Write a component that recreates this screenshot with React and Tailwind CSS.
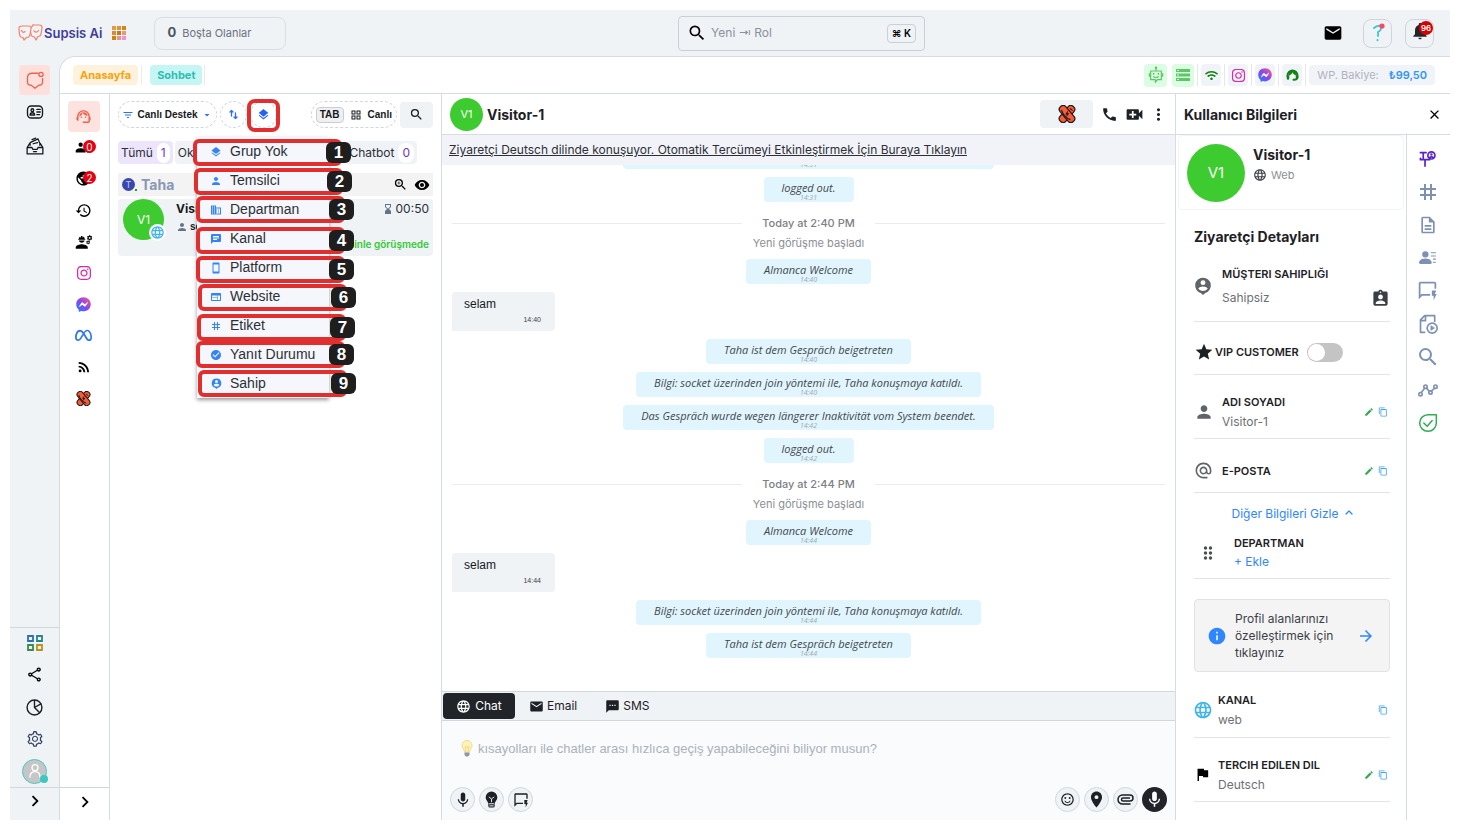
import React from "react";
import {
  MdLayers, MdPerson, MdDomain, MdChat, MdSmartphone, MdWeb, MdTag, MdCheckCircle, MdSearch, MdEmail,
  MdNotifications, MdSupportAgent, MdGroup, MdPublic, MdHistory, MdEngineering, MdRssFeed, MdFilterList,
  MdArrowDropDown, MdGridView, MdZoomIn, MdVisibility, MdHourglassBottom, MdLanguage, MdCall, MdVideoCall,
  MdMoreVert, MdClose, MdAssignmentInd, MdStar, MdAlternateEmail, MdEdit, MdContentCopy, MdDragIndicator,
  MdInfo, MdArrowForward, MdFlag, MdMic, MdOutlineQuickreply, MdPlace, MdSms,
  MdOutlineDescription, MdOutlineSentimentSatisfied, MdChevronRight, MdOutlineShare, MdMail,
} from "react-icons/md";
import { FaInstagram, FaFacebookMessenger, FaWifi } from "react-icons/fa";
import { FaMeta } from "react-icons/fa6";
import { BsPersonLinesFill } from "react-icons/bs";
import { AiOutlineSetting } from "react-icons/ai";

const stroke = { fill: "none", stroke: "currentColor", strokeLinecap: "round", strokeLinejoin: "round" };

function PersonPin({ size = 16, className = "" }) {
  return (
    <svg width={size} height={size} viewBox="0 0 24 24" className={className} aria-hidden="true">
      <path
        fill="currentColor"
        fillRule="evenodd"
        d="M12 1a10.300 10.300 0 0 1 3 20.200L12 24l-3-2.800A10.300 10.300 0 0 1 12 1Zm0 3.200a3.300 3.300 0 1 0 0 6.600 3.300 3.300 0 0 0 0-6.600Zm0 8.500c-2.700 0-5.400 1-6.300 2.700 1.300 2 3.700 3.400 6.300 3.400s5-1.400 6.300-3.400c-.9-1.700-3.600-2.700-6.300-2.700Z"
      />
    </svg>
  );
}

function Knot({ size = 16 }) {
  return (
    <svg width={size} height={size} viewBox="0 0 24 24" aria-hidden="true">
      <g stroke="#1f1a1a" strokeWidth="1.600" fill="#fb5a36">
        <rect x="7" y="-1" width="10" height="26" rx="4.500" transform="rotate(40 12 12)" />
        <rect x="7" y="-1" width="10" height="26" rx="4.500" transform="rotate(-40 12 12)" />
        <path fill="none" d="M4.500 6.500c2 6 6 11 12 13M16 4.500L19.500 7.500" />
      </g>
      <path fill="#1f1a1a" d="M13.500 7l-4 5.500h2.200l-.7 4 4-5.500h-2.200z" />
    </svg>
  );
}

function Paperclip() {
  return (
    <svg width="17" height="11" viewBox="0 0 34 22" {...stroke} strokeWidth="3" aria-hidden="true">
      <path d="M26 20H11a9 9 0 0 1 0-18h15a6 6 0 0 1 0 12H12a3 3 0 0 1 0-6h13" />
    </svg>
  );
}

function Messenger({ size = 15 }) {
  return <FaFacebookMessenger size={size} fill="url(#messenger)" stroke="none" />;
}

function Instagram({ size = 16 }) {
  return <FaInstagram size={size} className="text-[#d92aa5]" />;
}

function Badge({ children }) {
  return (
    <span className="absolute -right-1 top-px flex h-[13px] w-[13px] items-center justify-center rounded-full bg-[#e60012] text-[10px] leading-none text-white">
      {children}
    </span>
  );
}

function IconButton({ label, className = "", children }) {
  return (
    <button type="button" aria-label={label} className={`flex shrink-0 items-center justify-center ${className}`}>
      {children}
    </button>
  );
}

function TopBar() {
  return (
    <header className="grid h-[46px] shrink-0 grid-cols-[14fr_247px_11fr] items-center bg-[#eff3f6]">
      <div className="flex h-full items-center pl-2">
        <svg width="25" height="18" viewBox="0 0 50 36" {...stroke} strokeWidth="2.400" className="text-[#f4816c]" aria-hidden="true">
          <path d="M8 4h14q5 0 4 5l-2 12q-1 6-7 6l-5 5-2-5q-6 0-7-6L2 10q-1-6 6-6Z" />
          <path d="M30 2h12q7 0 6 6l-2 12q-1 5-6 5l-4 7-3-6q-6 0-7-6l-1-5" />
          <path d="M27 7l3-5M7 13q3 6 7 2M32 14q5 5 9-1" />
        </svg>
        <span className="ml-px text-[13px] font-semibold leading-5 text-[#3f3d99]">Supsis Ai</span>
        <button type="button" aria-label="Uygulamalar" className="ml-2.5 grid h-[14px] w-[14px] grid-cols-3 gap-px">
          {["bg-[#e09a50]", "bg-[#df9238]", "bg-[#d38612]", "bg-[#dc8a28]", "bg-[#c87b10]", "bg-[#e59a70]", "bg-[#c98418]", "bg-[#e5958c]", "bg-[#f48fdc]"].map((c, i) => (
            <span key={i} className={`h-1 w-1 ${c}`} />
          ))}
        </button>
        <div className="ml-7 flex h-[33px] w-[132px] items-center gap-1.5 rounded-lg border border-[#dadfe5] px-3 text-[11px] text-[#6b7280]">
          <b className="text-[13px] text-[#4b5563]">0</b>
          <span>Boşta Olanlar</span>
        </div>
      </div>
      <label className="flex h-[35px] items-center rounded border border-[#c9d0d8] px-2">
        <MdSearch size={20} className="shrink-0 text-black" />
        <input
          aria-label="Ara"
          placeholder="Yeni ⇥ Rol"
          className="min-w-0 flex-1 bg-transparent pl-1 text-[12px] outline-none placeholder:text-[#8b919b]"
        />
        <kbd className="rounded-sm border border-[#c9d0d8] px-1 font-[Inter,sans-serif] text-[10px] font-semibold leading-[17px] text-black">⌘ K</kbd>
      </label>
      <div className="flex items-center justify-end pr-4">
        <IconButton label="Posta"><MdMail size={20} className="text-black" /></IconButton>
        <IconButton label="Yardım" className="ml-5 h-[29px] w-[29px] rounded-lg border border-[#cfd5dc]">
          <svg width="18" height="20" viewBox="0 0 18 20" {...stroke} strokeWidth="1.800" className="text-[#3cc8c8]" aria-hidden="true">
            <path d="M5 5q3-3 7-2 1 4-3 6v4" />
            <path d="M8.500 17v.200" strokeWidth="2" />
            <circle cx="13" cy="3" r="2.600" fill="#ff4560" stroke="none" />
          </svg>
        </IconButton>
        <IconButton label="Bildirimler" className="relative ml-[13px] h-[29px] w-[29px] rounded-lg border border-[#cfd5dc] pb-1">
          <MdNotifications size={20} className="text-[#22262b]" />
          <span className="absolute right-0 top-px flex h-[14px] w-[14px] items-center justify-center rounded-full bg-[#d50000] text-[8px] font-semibold leading-none text-white">96</span>
        </IconButton>
      </div>
    </header>
  );
}

function MainRail() {
  return (
    <aside className="flex w-[49px] shrink-0 flex-col items-center bg-[#eff3f6]">
      <nav className="flex flex-1 flex-col items-center pt-[9px]">
        <IconButton label="Sohbetler" className="h-[30px] w-[31px] rounded-sm bg-[#fde0dc]">
          <svg width="18" height="18" viewBox="0 0 24 24" {...stroke} strokeWidth="1.700" className="text-[#f0614c]" aria-hidden="true">
            <path d="M16 3H8C4 3 2 5 2 9v6c0 3 2 4 5 4l5 4 5-4c3 0 5-1 5-4v-5" />
            <circle cx="20" cy="4.500" r="2.800" />
          </svg>
        </IconButton>
        <IconButton label="Kişiler" className="h-[34px] w-[31px]">
          <svg width="18" height="18" viewBox="0 0 24 24" {...stroke} strokeWidth="1.800" className="text-[#15181c]" aria-hidden="true">
            <rect x="2" y="4" width="20" height="16" rx="5" />
            <circle cx="8.500" cy="9.500" r="1.800" />
            <path d="M5.500 16q0-3 3-3t3 3ZM14.500 8.500H19M14.500 12H19M14.500 15.500H18" />
          </svg>
        </IconButton>
        <IconButton label="Arşiv" className="h-[33px] w-[31px]">
          <svg width="18" height="18" viewBox="0 0 24 24" {...stroke} strokeWidth="1.700" className="text-[#15181c]" aria-hidden="true">
            <path d="M1.500 14v8.500h21V14H16l-1 2.500H9L8 14ZM1.500 14L5 8.500M22.500 14L19 8.500M5.500 11V7.500L16 2.500l2.500 6V11M8 3.500l5-2M9.500 9l6-1.500M10 19.500h4" />
          </svg>
        </IconButton>
      </nav>
      <div className="flex h-[160px] w-full flex-col items-center border-t border-[#cfd8df]">
        <IconButton label="Modüller" className="h-[30px] w-8">
          <svg width="16" height="16" viewBox="0 0 16 16" fill="none" strokeWidth="1.800" aria-hidden="true">
            <path stroke="#2872b5" d="M1 1h5v5H1z" />
            <path stroke="#278688" d="M10 1h5v5h-5z" />
            <path stroke="#3c8a4e" d="M1 10h5v5H1z" />
            <path stroke="#b99316" d="M10 10h5v5h-5z" />
          </svg>
        </IconButton>
        <IconButton label="Paylaş" className="h-[33px] w-8"><MdOutlineShare size={17} className="text-black" /></IconButton>
        <IconButton label="Raporlar" className="h-8 w-8">
          <svg width="17" height="17" viewBox="0 0 24 24" {...stroke} strokeWidth="2" className="text-[#1c1f24]" aria-hidden="true">
            <circle cx="12" cy="12" r="10.500" />
            <path d="M12 2v10l9-5M12 12l7 7" />
          </svg>
        </IconButton>
        <IconButton label="Ayarlar" className="h-8 w-8"><AiOutlineSetting size={18} className="text-[#3a4466]" /></IconButton>
        <IconButton label="Profil" className="relative h-8 w-8">
          <span className="flex h-[25px] w-[25px] items-center justify-center rounded-full border border-[#4cc8c0] bg-[#c4c6c8] text-white">
            <svg width="16" height="16" viewBox="0 0 24 24" {...stroke} strokeWidth="2" aria-hidden="true">
              <circle cx="12" cy="7" r="4.500" />
              <path d="M4.500 21q0-8 7.500-8t7.500 8" />
            </svg>
          </span>
          <span className="absolute bottom-1 right-[3px] h-2 w-2 rounded-full bg-[#3cc8be]" />
        </IconButton>
      </div>
      <IconButton label="Menüyü genişlet" className="h-[33px] w-full border-t border-[#cfd8df] pb-1.5">
        <MdChevronRight size={22} className="text-black" />
      </IconButton>
    </aside>
  );
}

function SubHeader() {
  const tile = "h-[22px] w-5 rounded bg-[#f0f4f8]";
  const rule = <span className="h-[22px] w-px bg-[#e4e8ec]" />;
  return (
    <div className="flex h-[37px] shrink-0 items-center justify-between border-b border-[#d5dde3] pl-[13px] pr-[15px]">
      <nav className="flex items-center text-[11px] font-bold">
        <a href="#anasayfa" className="rounded bg-[#fff2dc] px-[7px] leading-5 text-[#f9a30c]">Anasayfa</a>
        <span className="ml-[3px] h-5 w-px bg-[#e8ebee]" />
        <a href="#sohbet" className="ml-2 rounded bg-[#c6f6f3] px-[7px] leading-5 text-[#2fbdb4]">Sohbet</a>
        <span className="ml-0.5 h-5 w-px bg-[#e8ebee]" />
      </nav>
      <div className="flex items-center gap-[3px]">
        <IconButton label="Bot" className="h-[23px] w-[23px] rounded bg-[#dcfce3] text-[#5dc763]">
          <svg width="16" height="18" viewBox="0 0 24 26" {...stroke} strokeWidth="1.800" aria-hidden="true">
            <path d="M4 7h16v13h-6l-3 4v-4H4ZM12 7V2M2 11v4M22 11v4M8.500 15.500q3.500 2.500 7 0" />
            <path d="M8.500 11v.500M15.500 11v.500" strokeWidth="2.500" />
            <circle cx="12" cy="2" r="1" />
          </svg>
        </IconButton>
        <IconButton label="Sunucu" className="ml-0.5 h-[23px] w-[22px] rounded bg-[#dcfce3] text-[#5dc763]">
          <svg width="14" height="12" viewBox="0 0 14 12" fill="currentColor" aria-hidden="true">
            <path d="M0 0h14v3H0zM0 4.500h14v3H0zM0 9h14v3H0z" />
            <path fill="#dcfce3" d="M1 1h2v1H1zM1 5.500h2v1H1zM1 10h2v1H1z" />
          </svg>
        </IconButton>
        {rule}
        <IconButton label="Bağlantı" className={tile}><FaWifi size={13} className="text-[#128012]" /></IconButton>
        {rule}
        <IconButton label="Instagram" className={tile}><Instagram size={15} /></IconButton>
        {rule}
        <IconButton label="Messenger" className={tile}><Messenger size={14} /></IconButton>
        {rule}
        <IconButton label="Temsilci" className={tile}>
          <svg width="13" height="12" viewBox="0 0 26 24" {...stroke} strokeWidth="4" className="text-[#128012]" aria-hidden="true">
            <path d="M3 15v-2a10 10 0 0 1 20 0v3q0 6-8 5.500" />
            <path d="M4 15v4M22 15v2" strokeWidth="5" />
            <path d="M6 13q5-1 7-7 2 6 8 7V7l-8-4-7 4Z" fill="currentColor" strokeWidth="1" />
          </svg>
        </IconButton>
        {rule}
        <div className="flex items-center gap-2.5 rounded bg-[#f0f4f8] px-2 text-[11px] leading-5">
          <span className="text-[#b0b2be]">WP. Bakiye:</span>
          <b className="font-semibold text-[#3396f5]">₺99,50</b>
        </div>
      </div>
    </div>
  );
}

function ChannelRail() {
  const items = [
    ["Ziyaretçiler", <><MdGroup size={17} /><Badge>0</Badge></>],
    ["Siteler", <><MdPublic size={17} /><Badge>2</Badge></>],
    ["Geçmiş", <MdHistory size={17} />],
    ["Ekip", <MdEngineering size={18} />],
    ["Instagram", <Instagram />],
    ["Messenger", <Messenger />],
    ["Meta", <FaMeta size={17} className="text-[#2f78f0]" />],
    ["RSS", <MdRssFeed size={16} />],
    ["Yapay zeka", <Knot size={15} />],
  ];
  return (
    <aside className="flex w-[50px] shrink-0 flex-col border-r border-[#d5dde3]">
      <nav className="flex flex-1 flex-col items-center pr-0.5 pt-[7px]">
        <div className="flex h-[313px] flex-col items-center">
          <IconButton label="Canlı destek" className="h-[31px] w-8 rounded-sm bg-[#fde3df]">
            <MdSupportAgent size={17} className="text-[#f0614c]" />
          </IconButton>
          {items.map(([label, icon]) => (
            <IconButton key={label} label={label} className="w-8 flex-1 text-black">
              <span className="relative">{icon}</span>
            </IconButton>
          ))}
        </div>
      </nav>
      <IconButton label="Kanalları genişlet" className="h-[33px] w-full border-t border-[#cfd8df] pb-1">
        <MdChevronRight size={22} className="text-black" />
      </IconButton>
    </aside>
  );
}

const groupings = [
  ["Grup Yok", <MdLayers size={12} />],
  ["Temsilci", <MdPerson size={12} />],
  ["Departman", <MdDomain size={12} />],
  ["Kanal", <MdChat size={12} />],
  ["Platform", <MdSmartphone size={12} />],
  ["Website", <MdWeb size={12} />],
  ["Etiket", <MdTag size={12} />],
  ["Yanıt Durumu", <MdCheckCircle size={12} />],
  ["Sahip", <PersonPin size={11} />],
];

const marks = [
  [-4, 2], [-3, 31], [-1, 59], [-1, 90], [-1, 119], [1, 147], [0, 177], [-1, 204], [1, 233],
];

function GroupMenu() {
  return (
    <div className="absolute left-[-53px] top-[36px] z-10 w-[132px] bg-[#f5f7fc] shadow-[0_2px_4px_rgba(0,0,0,0.4)]">
      <ul>
        {groupings.map(([label, icon]) => (
          <li key={label}>
            <button type="button" className="flex h-[29px] w-full items-center gap-2 whitespace-nowrap pl-[13px] text-left text-[14px] font-normal text-[#2c3036]">
              <span className="flex w-3 justify-center text-[#3385f7]">{icon}</span>
              {label}
            </button>
          </li>
        ))}
      </ul>
      {marks.map(([x, y], i) => (
        <div key={i} className="pointer-events-none absolute h-[27px] w-[149px] rounded-md border-4 border-[#e12f2f]" style={{ left: x, top: y }}>
          <span className="absolute -right-[13px] -top-px flex h-[21px] w-[25px] items-center justify-center rounded-md bg-[#1e1e1e] text-[17px] font-semibold leading-none text-white">
            {i + 1}
          </span>
        </div>
      ))}
    </div>
  );
}

function Filter({ label, count, active }) {
  return (
    <button type="button" className={`flex h-[23px] shrink-0 items-center gap-1 rounded px-[3px] text-[12px] text-[#2c3036] ${active ? "bg-[#ece5fb]" : "bg-[#eff3f6]"}`}>
      {label}
      <span className="rounded-full bg-white px-1 leading-5 text-[#6a35c9]">{count}</span>
    </button>
  );
}

function ConversationList() {
  return (
    <section className="flex w-[332px] shrink-0 flex-col border-r border-[#d5dde3] px-2 pt-[7px]">
      <div className="flex items-center gap-[3px] font-['Liberation_Sans',sans-serif] text-[10px] font-bold text-[#16191d]">
        <button type="button" className="flex h-[27px] w-[99px] items-center justify-center gap-[3px] whitespace-nowrap rounded-full border border-dashed border-[#cfd6dd]">
          <MdFilterList size={12} className="text-[#2f6df6]" />
          Canlı Destek
          <MdArrowDropDown size={12} className="text-[#2f6df6]" />
        </button>
        <IconButton label="Sırala" className="h-[27px] w-[27px] rounded-full border border-dashed border-[#cfd6dd]">
          <svg width="9" height="11" viewBox="0 0 18 22" {...stroke} strokeWidth="2.600" className="text-[#2f6df6]" aria-hidden="true">
            <path d="M5 14V3M2 6l3-3 3 3M13 8v11M10 16l3 3 3-3" />
          </svg>
        </IconButton>
        <div className="relative">
          <IconButton label="Grupla" className="h-[27px] w-[27px] rounded-full border border-dashed border-[#cfd6dd]">
            <MdLayers size={13} className="text-[#2463f5]" />
          </IconButton>
          <span className="pointer-events-none absolute -inset-x-[3px] -bottom-1 -top-[2px] rounded-lg border-4 border-[#e12f2f]" />
          <GroupMenu />
        </div>
        <button type="button" className="ml-auto flex h-[27px] items-center rounded-full border border-dashed border-[#cfd6dd] px-1">
          <kbd className="rounded border border-[#c9cdd2] bg-[#f0f0f1] px-[3px] font-['Liberation_Sans',sans-serif] leading-[14px]">TAB</kbd>
          <MdGridView size={12} className="mx-1.5" />
          Canlı
        </button>
        <IconButton label="Ara" className="h-[26px] w-[33px] rounded bg-[#eff3f6]"><MdSearch size={15} /></IconButton>
      </div>
      <div className="mt-[13px] flex w-[299px] items-center justify-between gap-0.5">
        <div className="flex gap-0.5">
          <Filter label="Tümü" count="1" active />
          <Filter label="Okunmamış" count="0" />
        </div>
        <Filter label="Chatbot" count="0" />
      </div>
      <div className="mt-[9px] flex h-[23px] items-center bg-[#f3f3f3] pl-1 pr-[3px]">
        <span className="relative flex h-[13px] w-[13px] items-center justify-center rounded-full bg-[#3949ab] text-[9px] text-[#c5cbff]">
          T
          <span className="absolute -right-0.5 bottom-0 h-0.5 w-0.5 bg-[#20a020]" />
        </span>
        <b className="ml-1.5 flex-1 text-[14px] font-bold text-[#8a97b5]">Taha</b>
        <IconButton label="Yakınlaştır"><MdZoomIn size={15} /></IconButton>
        <IconButton label="Göster" className="ml-1.5"><MdVisibility size={16} /></IconButton>
      </div>
      <article className="mt-[3px] flex h-[57px] rounded bg-[#eff3f6] pl-[5px] pr-1">
        <div className="relative h-[41px] w-[41px] rounded-full bg-[#3ecb2f] text-center text-[12px] leading-[41px] text-white">
          V1
          <span className="absolute -bottom-px -right-0.5 flex h-[17px] w-[17px] items-center justify-center rounded-full bg-white">
            <MdLanguage size={15} className="text-[#3fb5ea]" />
          </span>
        </div>
        <div className="flex min-w-0 flex-1 flex-col pl-3 text-[#16191d]">
          <div className="flex items-center justify-between">
            <b className="text-[12px] font-bold leading-5">Visitor-1</b>
            <span className="flex items-center text-[12px] text-[#2c3036]">
              <MdHourglassBottom size={12} className="mr-0.5 text-[#64748b]" />
              00:50
            </span>
          </div>
          <div className="flex items-center gap-0.5 font-['Liberation_Sans',sans-serif] text-[10px] font-bold leading-[15px]">
            <MdPerson size={12} className="text-[#64748b]" />
            selam
          </div>
          <p className="text-right text-[10px] font-semibold leading-5 text-[#35c935]">Seninle görüşmede</p>
        </div>
      </article>
    </section>
  );
}

const messages = [
  ["note", "Das Gespräch wurde wegen längerer Inaktivität vom System beendet.", "14:31"],
  ["note", "logged out.", "14:31"],
  ["day", "Today at 2:40 PM"],
  ["note", "Almanca Welcome", "14:40"],
  ["user", "selam", "14:40"],
  ["note", "Taha ist dem Gespräch beigetreten", "14:40"],
  ["note", "Bilgi: socket üzerinden join yöntemi ile, Taha konuşmaya katıldı.", "14:40"],
  ["note", "Das Gespräch wurde wegen längerer Inaktivität vom System beendet.", "14:42"],
  ["note", "logged out.", "14:42"],
  ["day", "Today at 2:44 PM"],
  ["note", "Almanca Welcome", "14:44"],
  ["user", "selam", "14:44"],
  ["note", "Bilgi: socket üzerinden join yöntemi ile, Taha konuşmaya katıldı.", "14:44"],
  ["note", "Taha ist dem Gespräch beigetreten", "14:44"],
];

function Message({ kind, text, time }) {
  if (kind === "day") {
    return (
      <div className="shrink-0 pt-px text-center text-[11px] text-[#8c8f93]">
        <div className="flex items-center gap-5 leading-6">
          <span className="h-px flex-1 bg-[#e9ebee]" />
          <span className="font-medium text-[#7d8084]">{text}</span>
          <span className="h-px flex-1 bg-[#e9ebee]" />
        </div>
        <p className="leading-4">Yeni görüşme başladı</p>
      </div>
    );
  }
  if (kind === "user") {
    return (
      <div className="flex h-[39px] w-[103px] shrink-0 flex-col rounded rounded-bl-none bg-[#eff3f6] px-3 pt-1 font-['Liberation_Sans',sans-serif] text-[12px] leading-4 text-[#16191d]">
        {text}
        <time className="pr-0.5 pt-[3px] text-right text-[7px] leading-[10px] text-[#3b3f45]">{time}</time>
      </div>
    );
  }
  return (
    <div className="flex h-[25px] shrink-0 flex-col items-center self-center rounded bg-[#e1f5fe] px-[18px] pt-[3px] font-['Open_Sans',sans-serif] text-[11px] italic leading-4 text-[#41484d]">
      {text}
      <time className="-mt-0.5 text-[7px] leading-[8px] text-[#9aabb3]">{time}</time>
    </div>
  );
}

function Conversation() {
  const round = "h-[25px] w-[25px] rounded-full border border-[#cfd8df] bg-[#eff3f6] text-[#1d2126]";
  return (
    <section className="flex min-w-0 flex-1 flex-col border-r border-[#d5dde3]">
      <div className="flex h-[41px] shrink-0 items-center border-b border-[#d5dde3] pl-2 pr-[7px] text-[#1d2126]">
        <span className="h-[33px] w-[33px] rounded-full bg-[#3ecb2f] text-center text-[11px] leading-[33px] text-white">V1</span>
        <h2 className="ml-1 flex-1 text-[14px] font-bold">Visitor-1</h2>
        <IconButton label="Yapay zeka" className="h-[28px] w-[53px] rounded bg-[#eff3f6]"><Knot size={18} /></IconButton>
        <IconButton label="Ara" className="ml-2"><MdCall size={17} /></IconButton>
        <IconButton label="Görüntülü ara" className="ml-1.5"><MdVideoCall size={21} /></IconButton>
        <IconButton label="Diğer" className="ml-1"><MdMoreVert size={19} /></IconButton>
      </div>
      <a href="#tercume" className="block shrink-0 bg-[#f2f3f8] px-[7px] text-[12px] leading-[30px] text-[#2c3036] underline">
        Ziyaretçi Deutsch dilinde konuşuyor. Otomatik Tercümeyi Etkinleştirmek İçin Buraya Tıklayın
      </a>
      <div className="flex min-h-0 flex-1 flex-col justify-end gap-2 overflow-hidden px-2.5 pb-[33px]">
        {messages.map(([kind, text, time], i) => (
          <Message key={i} kind={kind} text={text} time={time} />
        ))}
      </div>
      <div className="flex h-[30px] shrink-0 items-center border-y border-[#cfd8df] bg-[#eff3f6] px-px text-[12px] text-[#1d2126]">
        <button type="button" className="flex h-[26px] w-[72px] items-center justify-center gap-1 rounded-sm bg-[#212529] text-white"><MdLanguage size={15} />Chat</button>
        <button type="button" className="ml-3.5 flex items-center gap-[3px]"><MdEmail size={15} />Email</button>
        <button type="button" className="ml-7 flex items-center gap-[3px]"><MdSms size={15} />SMS</button>
      </div>
      <div className="flex h-[99px] shrink-0 flex-col bg-[#f9fbfd] px-2 pb-2 pt-[18px]">
        <div className="flex flex-1 gap-[5px] pl-[11px]">
          <svg width="12" height="18" viewBox="0 0 24 36" aria-hidden="true">
            <path fill="#fff3b8" stroke="#f0dc90" strokeWidth="2" d="M12 3a10 10 0 0 1 10 10c0 6-5 8-5 13H7C7 21 2 19 2 13A10 10 0 0 1 12 3Z" />
            <path fill="none" stroke="#e8c860" strokeWidth="1.200" d="M10 25L8 15l4 2 4-2-2 10" />
            <path fill="#8d979c" d="M7 27h10v5l-3 3h-4l-3-3z" />
          </svg>
          <textarea
            aria-label="Mesaj"
            rows={1}
            placeholder="kısayolları ile chatler arası hızlıca geçiş yapabileceğini biliyor musun?"
            className="h-5 flex-1 resize-none bg-transparent font-['Liberation_Sans',sans-serif] text-[13px] leading-5 outline-none placeholder:text-[#abb2ba]"
          />
        </div>
        <div className="flex items-center gap-1">
          <IconButton label="Sesli yazma" className={round}><MdMic size={18} /></IconButton>
          <IconButton label="Öneriler" className={round}>
            <svg width="13" height="17" viewBox="0 0 24 32" aria-hidden="true">
              <path fill="currentColor" d="M12 1a11 11 0 0 1 11 11c0 5-4 7-5 11v5q0 3-3 3H9q-3 0-3-3v-5C5 19 1 17 1 12A11 11 0 0 1 12 1Z" />
              <path fill="none" stroke="#eff3f6" strokeWidth="1.800" d="M7 11l5 4 5-4M12 15v6M7 24h10M8 28h8" />
            </svg>
          </IconButton>
          <IconButton label="Hazır yanıtlar" className={round}><MdOutlineQuickreply size={16} /></IconButton>
          <span className="flex-1" />
          <IconButton label="Emoji" className={round}><MdOutlineSentimentSatisfied size={15} /></IconButton>
          <IconButton label="Konum" className={round}><MdPlace size={19} /></IconButton>
          <IconButton label="Dosya ekle" className={round}><Paperclip /></IconButton>
          <IconButton label="Ses kaydı" className="h-[25px] w-[25px] rounded-full bg-[#212529] text-white"><MdMic size={19} /></IconButton>
        </div>
      </div>
    </section>
  );
}

function Tools({ edit = true }) {
  return (
    <div className="flex items-center gap-1 pr-0.5">
      {edit && <IconButton label="Düzenle"><MdEdit size={10} className="text-[#35a853]" /></IconButton>}
      <IconButton label="Kopyala"><MdContentCopy size={10} className="text-[#45a3f5]" /></IconButton>
    </div>
  );
}

function Field({ icon, label, value, tools, narrow, height }) {
  return (
    <div className={`flex items-center border-b border-[#e1e3e6] ${height}`}>
      <span className={`flex shrink-0 ${narrow ? "w-6" : "w-7"}`}>{icon}</span>
      <div className="min-w-0 flex-1">
        <p className="text-[11px] font-semibold leading-5 text-[#1d2126]">{label}</p>
        {value && <p className="text-[12px] leading-5 text-[#6c7075]">{value}</p>}
      </div>
      {tools}
    </div>
  );
}

function InfoRail() {
  const draw = { width: 20, height: 20, viewBox: "0 0 24 24", ...stroke, strokeWidth: 1.8 };
  const items = [
    ["Kullanıcı", <svg {...draw} width="17" height="18" strokeWidth="2.400" className="text-[#5b22cc]"><path d="M2 3h8M6 3v8M2 11v2h13M8.500 13v9" /><circle cx="17.500" cy="7" r="5" /><circle cx="17.500" cy="5.500" r="1" strokeWidth="1.500" /><path d="M14.500 10q3-2 6 0" /></svg>],
    ["Etiketler", <MdTag size={24} />],
    ["Notlar", <MdOutlineDescription size={20} />],
    ["Kişi bilgileri", <BsPersonLinesFill size={17} />],
    ["Hazır yanıtlar", <MdOutlineQuickreply size={21} />],
    ["Kayıtlar", <svg {...draw} strokeWidth="2"><path d="M8 22H3V7l5-5h12v7M9 2v6H3" /><circle cx="17" cy="17" r="6" /><path d="M15.500 14.500v5l4-2.500z" fill="currentColor" strokeWidth="1" /></svg>],
    ["Arama", <MdSearch size={24} />],
    ["Aktivite", <svg {...draw} strokeWidth="2"><circle cx="3" cy="17" r="2" /><circle cx="9" cy="8" r="2" /><circle cx="15" cy="15" r="2" /><circle cx="21" cy="8" r="2" /><path d="M4 15l4-5M10.500 10l3 3.500M16 13l4-3" /></svg>],
    ["Tamamla", <svg {...draw} className="text-[#2fae55]"><path d="M12 2h10v10A10 10 0 1 1 12 2Z" /><path d="M7 12l4 4 6-7" /></svg>],
  ];
  return (
    <nav className="flex w-[44px] shrink-0 flex-col items-center border-l border-[#d5dde3] pr-0.5 pt-[7px] text-[#7f91b2]">
      {items.map(([label, icon]) => (
        <IconButton key={label} label={label} className="h-[33px] w-8">{icon}</IconButton>
      ))}
    </nav>
  );
}

function InfoPanel() {
  return (
    <section className="flex w-[274px] shrink-0 flex-col">
      <div className="flex h-[41px] shrink-0 items-center justify-between border-b border-[#d5dde3] pl-2 pr-2">
        <h2 className="text-[14px] font-bold text-[#1d2126]">Kullanıcı Bilgileri</h2>
        <IconButton label="Kapat"><MdClose size={15} /></IconButton>
      </div>
      <div className="flex min-h-0 flex-1">
        <div className="min-w-0 flex-1 overflow-hidden">
          <div className="mx-0.5 flex h-[75px] rounded border border-[#f3f4f6] pl-2 pt-2">
            <span className="h-[58px] w-[58px] rounded-full bg-[#3ecb2f] text-center text-[15px] leading-[58px] text-white">V1</span>
            <div className="ml-2">
              <h3 className="text-[14px] font-bold leading-[21px] text-[#1d2126]">Visitor-1</h3>
              <p className="flex items-center gap-1 text-[11px] leading-5 text-[#8b8f94]"><MdLanguage size={14} className="text-[#3b3f45]" />Web</p>
            </div>
          </div>
          <div className="pl-[18px] pr-4">
            <h3 className="pt-4 text-[14px] font-bold leading-[21px] text-[#1d2126]">Ziyaretçi Detayları</h3>
            <div className="flex h-[75px] items-center border-b border-[#e1e3e6] pt-1">
              <PersonPin size={18} className="text-[#606468]" />
              <div className="ml-2.5 flex-1">
                <p className="text-[11px] font-semibold leading-[24px] text-[#1d2126]">MÜŞTERI SAHIPLIĞI</p>
                <p className="flex items-center justify-between text-[12px] leading-[24px] text-[#6c7075]">Sahipsiz<MdAssignmentInd size={19} className="text-[#3b3f45]" /></p>
              </div>
            </div>
            <label className="flex h-[53px] items-center border-b border-[#e1e3e6] pt-2 text-[11px] font-semibold text-[#1d2126]">
              <MdStar size={20} />
              <span className="ml-px">VIP CUSTOMER</span>
              <input type="checkbox" className="peer sr-only" />
              <span className="ml-2 flex h-[19px] w-9 items-center rounded-full bg-[#c4c4c4] p-px peer-checked:justify-end"><span className="h-[17px] w-[17px] rounded-full bg-white" /></span>
            </label>
            <Field height="h-[64px] pt-2.5" icon={<MdPerson size={20} className="text-[#606468]" />} label="ADI SOYADI" value="Visitor-1" tools={<Tools />} />
            <Field height="h-[54px] pt-2.5" icon={<MdAlternateEmail size={19} className="text-[#606468]" />} label="E-POSTA" tools={<Tools />} />
            <button type="button" className="flex h-[42px] w-full items-center justify-center text-[12px] text-[#2f86ff]">
              Diğer Bilgileri Gizle
              <svg width="8" height="5" viewBox="0 0 8 5" {...stroke} strokeWidth="1.300" className="mb-1 ml-1.5" aria-hidden="true"><path d="M1 4l3-3 3 3" /></svg>
            </button>
            <div className="flex h-[44px] border-b border-[#e1e3e6]">
              <MdDragIndicator size={20} className="ml-1 mt-2 text-[#4b4f54]" />
              <div className="-mt-0.5 ml-4">
                <p className="text-[11px] font-semibold leading-5 text-[#1d2126]">DEPARTMAN</p>
                <button type="button" className="block text-[12px] leading-[18px] text-[#2f86ff]">+ Ekle</button>
              </div>
            </div>
            <a href="#profil" className="mt-5 flex h-[73px] items-center rounded border border-[#e0e2e5] bg-[#f4f4f5] pl-3 pr-3.5 text-[12px] leading-[17px] text-[#3b3f45]">
              <MdInfo size={20} className="shrink-0 text-[#2f86ff]" />
              <span className="ml-2 flex-1">Profil alanlarınızı özelleştirmek için tıklayınız</span>
              <MdArrowForward size={18} className="ml-4 shrink-0 text-[#2f86ff]" />
            </a>
            <Field height="h-[66px] pt-2.5" narrow icon={<MdLanguage size={20} className="-ml-px text-[#3fb5ea]" />} label="KANAL" value="web" tools={<Tools edit={false} />} />
            <Field height="h-[64px] pt-2.5" narrow icon={<MdFlag size={17} className="text-black" />} label="TERCIH EDILEN DIL" value="Deutsch" tools={<Tools />} />
          </div>
        </div>
        <InfoRail />
      </div>
    </section>
  );
}

export default function App() {
  return (
    <div className="h-screen bg-white p-2.5 font-[Inter,sans-serif]">
      <svg width="0" height="0" className="absolute" aria-hidden="true">
        <defs>
          <linearGradient id="messenger" x1="0" y1="1" x2="1" y2="0">
            <stop offset="0" stopColor="#1685ff" />
            <stop offset="0.500" stopColor="#8a45f2" />
            <stop offset="1" stopColor="#ff6170" />
          </linearGradient>
        </defs>
      </svg>
      <div className="flex h-full flex-col">
        <TopBar />
        <div className="flex min-h-0 flex-1 bg-[#eff3f6]">
          <MainRail />
          <main className="flex min-w-0 flex-1 flex-col rounded-tl-2xl border-l border-t border-[#d5dde3] bg-white">
            <SubHeader />
            <div className="flex min-h-0 flex-1">
              <ChannelRail />
              <ConversationList />
              <Conversation />
              <InfoPanel />
            </div>
          </main>
        </div>
      </div>
    </div>
  );
}
